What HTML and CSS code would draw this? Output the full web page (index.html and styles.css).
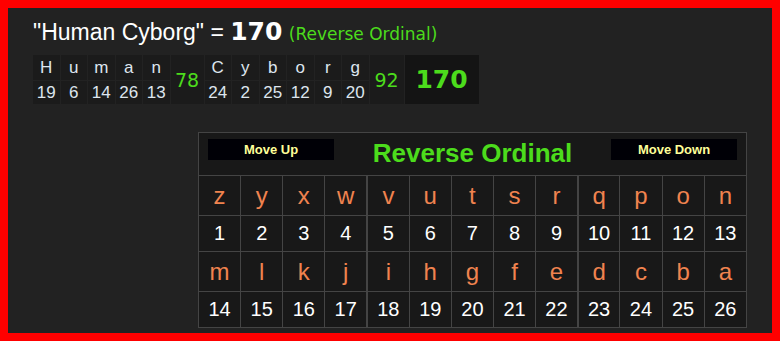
FILE: index.html
```html
<!DOCTYPE html>
<html>
<head>
<meta charset="utf-8">
<link rel="stylesheet" href="styles.css">
</head>
<body>
<div class="frame">
  <div class="title">"Human Cyborg" = <b class="sum">170</b> <span class="cipher">(Reverse Ordinal)</span></div>
  <table class="breakdown">
    <tr class="letters">
      <td>H</td><td>u</td><td>m</td><td>a</td><td>n</td>
      <td class="wsum w1" rowspan="2">78</td>
      <td>C</td><td>y</td><td>b</td><td>o</td><td>r</td><td>g</td>
      <td class="wsum w2" rowspan="2">92</td>
      <td class="total" rowspan="2">170</td>
    </tr>
    <tr class="values">
      <td>19</td><td>6</td><td>14</td><td>26</td><td>13</td>
      <td>24</td><td>2</td><td>25</td><td>12</td><td>9</td><td>20</td>
    </tr>
  </table>
  <table class="board">
    <tr>
      <td class="head" colspan="13">
        <div class="head-row">
          <button class="move">Move Up</button>
          <span class="cipher-name">Reverse Ordinal</span>
          <button class="move">Move Down</button>
        </div>
      </td>
    </tr>
    <tr class="l">
      <td>z</td><td>y</td><td>x</td><td>w</td><td class="g">v</td><td>u</td><td>t</td><td>s</td><td>r</td><td class="g">q</td><td>p</td><td>o</td><td>n</td>
    </tr>
    <tr class="n">
      <td>1</td><td>2</td><td>3</td><td>4</td><td class="g">5</td><td>6</td><td>7</td><td>8</td><td>9</td><td class="g">10</td><td>11</td><td>12</td><td>13</td>
    </tr>
    <tr class="l">
      <td>m</td><td>l</td><td>k</td><td>j</td><td class="g">i</td><td>h</td><td>g</td><td>f</td><td>e</td><td class="g">d</td><td>c</td><td>b</td><td>a</td>
    </tr>
    <tr class="n">
      <td>14</td><td>15</td><td>16</td><td>17</td><td class="g">18</td><td>19</td><td>20</td><td>21</td><td>22</td><td class="g">23</td><td>24</td><td>25</td><td>26</td>
    </tr>
  </table>
</div>
</body>
</html>
```
FILE: styles.css
```css
html, body {
  margin: 0;
  padding: 0;
  background: #ff0000;
}

.frame {
  box-sizing: border-box;
  width: 780px;
  height: 341px;
  border: 8px solid #ff0000;
  background: #222222;
  padding: 12px 25px 0 25px;
  font-family: "Liberation Sans", Arial, sans-serif;
}

.title {
  height: 34px;
  font-size: 23px;
  line-height: 24px;
  color: #ffffff;
  white-space: nowrap;
}

.title .sum {
  font-family: "DejaVu Sans", Verdana, sans-serif;
  font-size: 25px;
  font-weight: bold;
}

.title .cipher {
  font-family: "DejaVu Sans", Verdana, sans-serif;
  font-size: 17px;
  color: #4cdc1c;
}

.breakdown {
  border-collapse: separate;
  border-spacing: 1px;
  margin: 0 0 0 -1px;
}

.breakdown td {
  padding: 0;
  width: 26.5px;
  text-align: center;
  background: #1b1b1b;
  color: #dde5ee;
  font-size: 17px;
}

.breakdown .letters td {
  height: 25px;
}

.breakdown .values td {
  height: 23px;
}

.breakdown .wsum {
  font-family: "DejaVu Sans", Verdana, sans-serif;
  font-size: 19px;
  color: #4cdc1c;
}

.breakdown .w1 {
  width: 33px;
}

.breakdown .w2 {
  width: 34px;
}

.breakdown .total {
  width: 74px;
  background: #141414;
  color: #4cdc1c;
  font-family: "DejaVu Sans", Verdana, sans-serif;
  font-size: 25px;
  font-weight: bold;
}

.board {
  width: 549px;
  margin: 27px 0 0 auto;
  border-collapse: collapse;
  table-layout: fixed;
  background: #181818;
}

.board td {
  border: 1px solid #444444;
  padding: 0;
  text-align: center;
}

.board td.g {
  border-left: 2px solid #444444;
}

.board .head {
  height: 42px;
  vertical-align: top;
}

.head-row {
  display: flex;
  justify-content: space-between;
  align-items: flex-start;
  padding: 5px 9px 0 9px;
}

.move {
  width: 126px;
  height: 21px;
  margin-top: 1px;
  padding: 0;
  border: none;
  background: #000006;
  color: #ffff99;
  font-family: "Liberation Sans", Arial, sans-serif;
  font-size: 13px;
  font-weight: bold;
  line-height: 21px;
}

.cipher-name {
  color: #4cdc1c;
  font-size: 26px;
  font-weight: bold;
}

.board .l td {
  height: 39px;
  color: #f0834f;
  font-size: 24px;
}

.board .n td {
  height: 35px;
  color: #ffffff;
  font-size: 20px;
}
```
